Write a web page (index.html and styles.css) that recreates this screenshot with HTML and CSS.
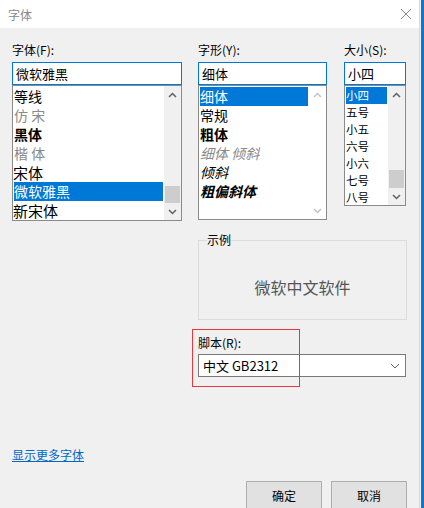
FILE: index.html
```html
<!DOCTYPE html>
<html lang="zh-CN">
<head>
  <meta charset="UTF-8">
  <title>字体</title>
  <link rel="stylesheet" href="styles.css">
</head>
<body>

  <div class="dialog">
    <!-- Title bar -->
    <div class="titlebar">
      <span>字体</span>
      <svg class="close" width="12" height="12" viewBox="0 0 12 12">
        <path d="M1 1 L11 11 M11 1 L1 11" stroke="#8a8a8a" stroke-width="1" fill="none"/>
      </svg>
    </div>

    <div class="content">
      <!-- Font / style / size pickers -->
      <div class="columns">
        <div class="col col-font">
          <div class="label">字体(F):</div>
          <div class="input">微软雅黑</div>
          <div class="list list-font">
            <div class="items">
              <div class="item">等线</div>
              <div class="item light">仿 宋</div>
              <div class="item bold">黑体</div>
              <div class="item light">楷 体</div>
              <div class="item song">宋体</div>
              <div class="item selected">微软雅黑</div>
              <div class="item song">新宋体</div>
            </div>
            <div class="scroll">
              <div class="arrow">
                <svg width="9" height="6" viewBox="0 0 9 6"><polyline points="1,5 4.5,1.5 8,5" fill="none" stroke="#606060" stroke-width="1.5"/></svg>
              </div>
              <div class="track"><div class="thumb"></div></div>
              <div class="arrow">
                <svg width="9" height="6" viewBox="0 0 9 6"><polyline points="1,1 4.5,4.5 8,1" fill="none" stroke="#606060" stroke-width="1.5"/></svg>
              </div>
            </div>
          </div>
        </div>

        <div class="col col-style">
          <div class="label">字形(Y):</div>
          <div class="input">细体</div>
          <div class="list list-style">
            <div class="items">
              <div class="item selected">细体</div>
              <div class="item">常规</div>
              <div class="item bold">粗体</div>
              <div class="item italic light">细体 倾斜</div>
              <div class="item italic">倾斜</div>
              <div class="item italic bold">粗偏斜体</div>
            </div>
            <div class="scroll disabled">
              <div class="arrow">
                <svg width="9" height="6" viewBox="0 0 9 6"><polyline points="1,5 4.5,1.5 8,5" fill="none" stroke="#c4c4c4" stroke-width="1.5"/></svg>
              </div>
              <div class="track"></div>
              <div class="arrow">
                <svg width="9" height="6" viewBox="0 0 9 6"><polyline points="1,1 4.5,4.5 8,1" fill="none" stroke="#c4c4c4" stroke-width="1.5"/></svg>
              </div>
            </div>
          </div>
        </div>

        <div class="col col-size">
          <div class="label">大小(S):</div>
          <div class="input">小四</div>
          <div class="list list-size">
            <div class="items">
              <div class="item selected">小四</div>
              <div class="item">五号</div>
              <div class="item">小五</div>
              <div class="item">六号</div>
              <div class="item">小六</div>
              <div class="item">七号</div>
              <div class="item">八号</div>
            </div>
            <div class="scroll">
              <div class="arrow">
                <svg width="9" height="6" viewBox="0 0 9 6"><polyline points="1,5 4.5,1.5 8,5" fill="none" stroke="#606060" stroke-width="1.5"/></svg>
              </div>
              <div class="track"><div class="thumb"></div></div>
              <div class="arrow">
                <svg width="9" height="6" viewBox="0 0 9 6"><polyline points="1,1 4.5,4.5 8,1" fill="none" stroke="#606060" stroke-width="1.5"/></svg>
              </div>
            </div>
          </div>
        </div>
      </div>

      <!-- Preview and script -->
      <div class="lower">
        <div class="sample">
          <span class="legend">示例</span>
          微软中文软件
        </div>

        <div class="script">
          <div class="label">脚本(R):</div>
          <div class="select">
            <span>中文 GB2312</span>
            <svg width="10" height="6" viewBox="0 0 10 6"><polyline points="1,1 5,5 9,1" fill="none" stroke="#606060" stroke-width="1"/></svg>
          </div>
          <div class="highlight"></div>
        </div>
      </div>

      <a class="more" href="#">显示更多字体</a>

      <div class="buttons">
        <button>确定</button>
        <button>取消</button>
      </div>
    </div>
  </div>

  <div class="accent"></div>

</body>
</html>
```

FILE: styles.css
```css
/* Global Styles */
body {
  margin: 0;
  height: 508px;
  overflow: hidden;
  display: flex;
  background-color: #f0f0f0;
  color: #000;
  font-family: "Noto Sans CJK SC", sans-serif;
  font-size: 12px;
}

.dialog {
  width: 419px;
  border-right: 1px solid #dadada;
  display: flex;
  flex-direction: column;
}

.accent {
  flex: 1;
  background-color: #0a78d2;
  border-left: 1px solid #f0f0f0;
}

/* Title bar */
.titlebar {
  height: 28px;
  flex-shrink: 0;
  background: #fff;
  color: #888;
  display: flex;
  align-items: center;
  justify-content: space-between;
  padding: 0 7px 0 8px;
}

.content {
  padding: 14px 12px 0 12px;
}

/* Pickers */
.columns {
  display: flex;
}

.col-font {
  width: 170px;
  margin-right: 16px;
}

.col-style {
  width: 129px;
  margin-right: 17px;
}

.col-size {
  width: 62px;
}

.label {
  height: 16px;
  line-height: 16px;
  margin-bottom: 4px;
}

.input {
  height: 23px;
  box-sizing: border-box;
  border: 1px solid #0078d7;
  background: #fff;
  font-size: 13px;
  line-height: 21px;
  padding-left: 3px;
}

.list {
  display: flex;
  box-sizing: border-box;
  border: 1px solid #8a8a8a;
  background: #fff;
}

.list-font { height: 136px; }
.list-style { height: 135px; }
.list-size { height: 121px; }

.items {
  flex: 1;
  min-width: 0;
  padding: 1px 1px 0 1px;
}

.item {
  height: 19px;
  line-height: 19px;
  font-size: 14px;
  white-space: nowrap;
  overflow: hidden;
}

.list-size .item {
  height: 17px;
  line-height: 17px;
  font-size: 11.5px;
}

.item.light {
  color: #8a8a8a;
}

.item.bold {
  font-weight: bold;
}

.item.italic {
  font-style: italic;
}

.item.song {
  font-size: 15px;
  margin-left: -1px;
}

.item.selected {
  background: #0078d7;
  color: #fff;
}

/* Scrollbars */
.scroll {
  width: 17px;
  flex-shrink: 0;
  background: #f0f0f0;
  display: flex;
  flex-direction: column;
}

.scroll.disabled {
  background: #fff;
}

.arrow {
  height: 17px;
  display: flex;
  align-items: center;
  justify-content: center;
}

.track {
  flex: 1;
  display: flex;
  flex-direction: column;
  justify-content: flex-end;
  align-items: center;
}

.thumb {
  width: 15px;
  height: 17px;
  background: #cdcdcd;
}

.list-size .thumb {
  height: 18px;
}

/* Sample and script */
.lower {
  margin-left: 186px;
  width: 209px;
  margin-top: 19px;
}

.sample {
  position: relative;
  height: 80px;
  box-sizing: border-box;
  border: 1px solid #dcdcdc;
  padding-top: 14px;
  display: flex;
  align-items: center;
  justify-content: center;
  font-size: 16px;
  color: #555;
}

.sample .legend {
  position: absolute;
  top: -9px;
  left: 8px;
  background: #f0f0f0;
  font-size: 12px;
  line-height: 16px;
  color: #000;
}

.script {
  position: relative;
  padding-top: 15px;
}

.script .label {
  margin-bottom: 3px;
}

.select {
  width: 208px;
  height: 23px;
  box-sizing: border-box;
  border: 1px solid #7a7a7a;
  background: #fff;
  display: flex;
  align-items: center;
  justify-content: space-between;
  padding: 0 5px 0 4px;
  font-size: 13px;
}

.highlight {
  position: absolute;
  left: -6px;
  top: 9px;
  width: 108px;
  height: 58px;
  box-sizing: border-box;
  border: 1px solid #e5393b;
}

/* Footer */
.more {
  display: block;
  width: max-content;
  margin-top: 70px;
  line-height: 16px;
  color: #0066cc;
  text-decoration: underline;
}

.buttons {
  display: flex;
  justify-content: flex-end;
  gap: 9px;
  margin-top: 18px;
}

.buttons button {
  width: 76px;
  height: 28px;
  box-sizing: border-box;
  background: #e1e1e1;
  border: 1px solid #adadad;
  font-family: inherit;
  font-size: 12px;
  color: #000;
  padding: 0;
}
```
